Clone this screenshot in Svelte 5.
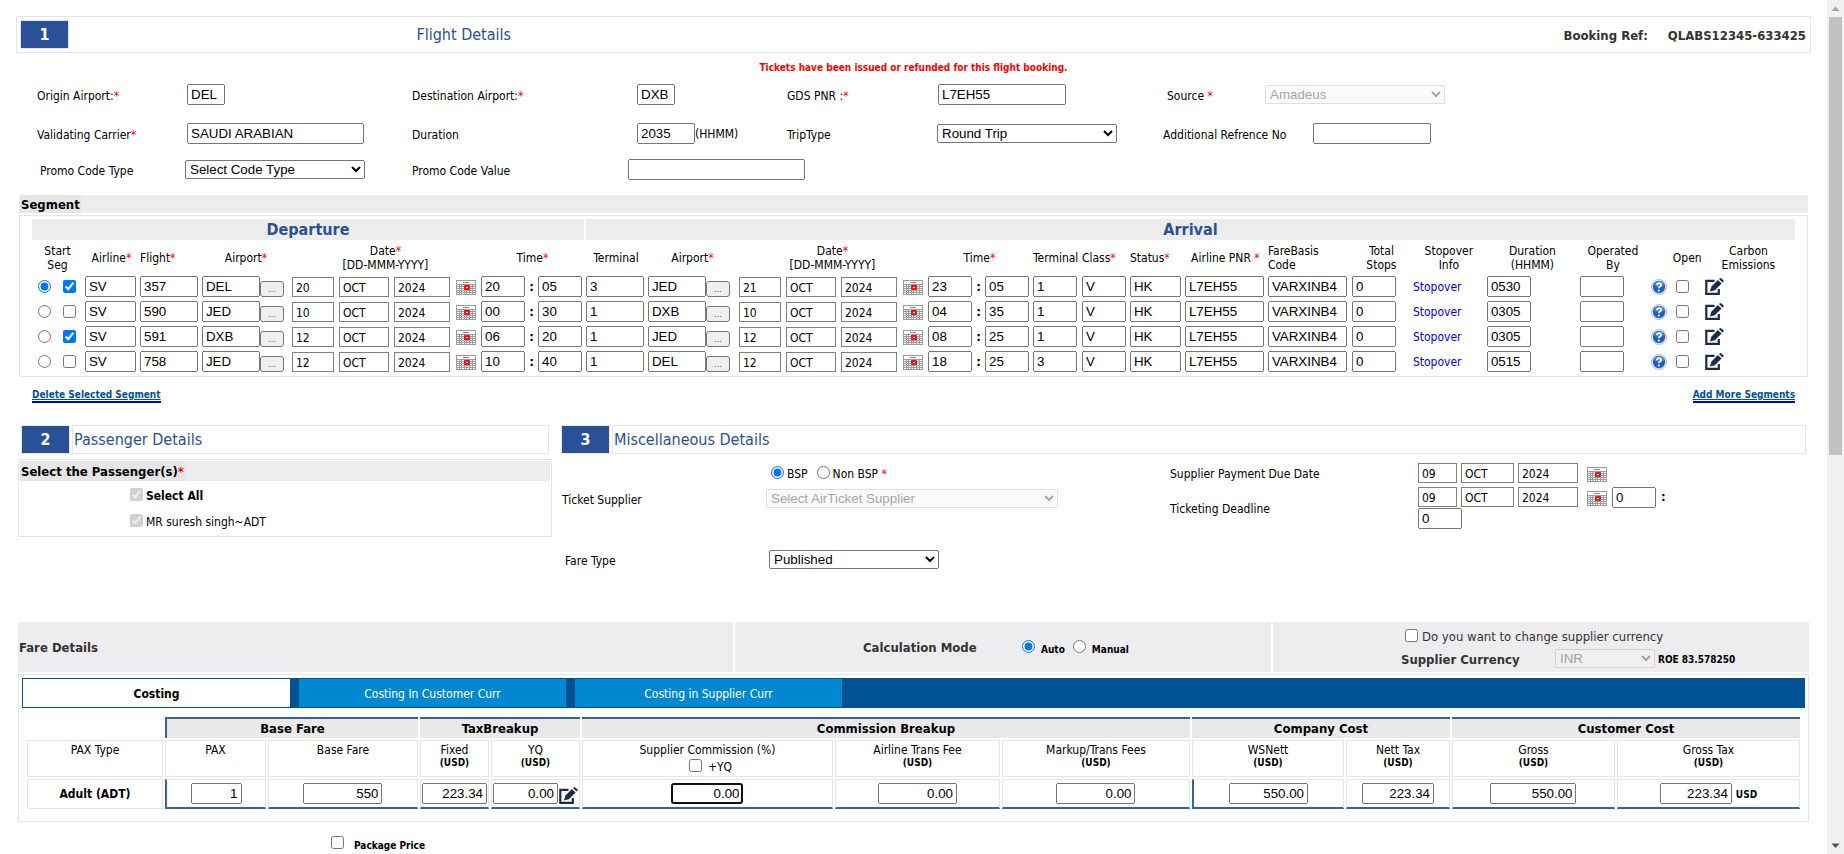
<script>
  const segments = [
    { start: true, pick: true, flight: '357', from: 'DEL', dd: '20', dt: ['20', '05'], dTerm: '3', to: 'JED', ad: '21', at: ['23', '05'], aTerm: '1', dur: '0530' },
    { start: false, pick: false, flight: '590', from: 'JED', dd: '10', dt: ['00', '30'], dTerm: '1', to: 'DXB', ad: '10', at: ['04', '35'], aTerm: '1', dur: '0305' },
    { start: false, pick: true, flight: '591', from: 'DXB', dd: '12', dt: ['06', '20'], dTerm: '1', to: 'JED', ad: '12', at: ['08', '25'], aTerm: '1', dur: '0305' },
    { start: false, pick: false, flight: '758', from: 'JED', dd: '12', dt: ['10', '40'], dTerm: '1', to: 'DEL', ad: '12', at: ['18', '25'], aTerm: '3', dur: '0515' }
  ];

  const segCols = [53, 55, 62, 90, 189, 105, 62, 91, 189, 105, 49, 48, 55, 83, 84, 61, 74, 93, 68, 25, 31, 91];
  const costCols = [136, 101, 150, 69, 89, 251, 165, 188, 152, 104, 163, 183];
  const segTotal = segCols.reduce((a, b) => a + b, 0);
  const costTotal = costCols.reduce((a, b) => a + b, 0);
</script>

{#snippet star()}<span class="star">*</span>{/snippet}

{#snippet calendar()}
  <svg class="cal" viewBox="0 0 20 15" width="20" height="15" role="img" aria-label="Pick a date">
    <rect x="0" y="0" width="20" height="15" fill="#9b9b9b" />
    <rect x="1" y="1" width="18" height="3" fill="#fff" />
    <rect x="7" y="2" width="6" height="1" fill="#8a8a8a" />
    {#each [5, 7, 9, 11, 13] as y}
      {#each [1, 4, 6, 9, 11, 14, 17] as x}
        <rect {x} {y} width={x === 4 || x === 9 ? 1 : 2} height="1" fill="#fff" />
      {/each}
    {/each}
    <rect x="9" y="6" width="4" height="3" fill="#fff" stroke="#f01414" stroke-width="2" stroke-linejoin="round" />
  </svg>
{/snippet}

{#snippet edit()}
  <svg class="edit" viewBox="0 0 19 17" width="19" height="17" aria-hidden="true">
    <path d="M9.5 2.9H1.3V15.8H13.8V11" fill="none" stroke="#1a2b4c" stroke-width="2.2" />
    <path d="M12.8 1.9L16.6 5.4L9.8 12.2L5 13.6L6.3 8.8Z" fill="#1a2b4c" />
    <path d="M14 1.1L15 0.3Q15.7 -0.1 16.4 0.4L18.4 2.3Q19 3 18.4 3.7L17.5 4.4Z" fill="#1a2b4c" />
  </svg>
{/snippet}

{#snippet help()}
  <svg viewBox="0 0 16 16" width="16" height="16" aria-hidden="true">
    <circle cx="8" cy="8" r="7.5" fill="#f2f4f8" stroke="#b4bccb" stroke-width="1" />
    <circle cx="8" cy="8" r="6.2" fill="#1c5fc2" />
    <path d="M2.4 6.5A5.8 5.8 0 0 1 13.6 6.5Q8 9 2.4 6.5Z" fill="#3f83dc" />
    <path d="M5.9 6.2Q6 4.2 8.2 4.2Q10.4 4.3 10.2 6.1Q10 7.3 8.6 7.8Q7.9 8.1 7.9 9.2" fill="none" stroke="#fff" stroke-width="1.7" />
    <circle cx="7.8" cy="11.6" r="1.1" fill="#fff" />
  </svg>
{/snippet}

{#snippet segDate(day, name)}
  <div class="line">
    <span class="trio">
      <input class="flat w42" aria-label="{name} day" value={day} />
      <input class="flat w50" aria-label="{name} month" value="OCT" />
      <input class="flat w56" aria-label="{name} year" value="2024" />
    </span>
    {@render calendar()}
  </div>
{/snippet}

{#snippet segTime(t, name)}
  <div class="line time">
    <input class="w44" aria-label="{name} hour" value={t[0]} /><b>:</b>
    <input class="w44" aria-label="{name} minute" value={t[1]} />
  </div>
{/snippet}

<div class="page">
  <main>
    <header class="top">
      <span class="num">1</span>
      <h2>Flight Details</h2>
      <p class="ref"><span>Booking Ref:</span><span>QLABS12345-633425</span></p>
    </header>

    <p class="warn">Tickets have been issued or refunded for this flight booking.</p>

    <section class="fields">
      <div class="row r1">
        <label for="origin">Origin Airport:{@render star()}</label>
        <div><input id="origin" class="w38" value="DEL" /></div>
        <label for="dest">Destination Airport:{@render star()}</label>
        <div><input id="dest" class="w38" value="DXB" /></div>
        <label for="pnr">GDS PNR :{@render star()}</label>
        <div><input id="pnr" class="w128" value="L7EH55" /></div>
        <label for="source">Source {@render star()}</label>
        <div><select id="source" class="w180" disabled><option>Amadeus</option></select></div>
      </div>
      <div class="row r2">
        <label for="carrier">Validating Carrier{@render star()}</label>
        <div><input id="carrier" class="w177" value="SAUDI ARABIAN" /></div>
        <label for="duration">Duration</label>
        <div class="unit"><input id="duration" class="w58" value="2035" />(HHMM)</div>
        <label for="trip">TripType</label>
        <div><select id="trip" class="w180"><option>Round Trip</option></select></div>
        <label for="addref">Additional Refrence No</label>
        <div><input id="addref" class="w118" /></div>
      </div>
      <div class="row r3">
        <label for="promo">Promo Code Type</label>
        <div><select id="promo" class="w180"><option>Select Code Type</option></select></div>
        <label for="promoval">Promo Code Value</label>
        <div><input id="promoval" class="w177" /></div>
      </div>
    </section>

    <section class="segment">
      <h3 class="bar"><span>Segment</span></h3>
      <div class="box">
        <table class="seg">
          <colgroup>
            {#each segCols as w}<col style="width: {(w / segTotal) * 100}%" />{/each}
          </colgroup>
          <thead>
            <tr class="legs">
              <th colspan="6" class="dep">Departure</th>
              <th colspan="16">Arrival</th>
            </tr>
            <tr class="heads">
              <th>Start<br />Seg</th>
              <th>Airline{@render star()}</th>
              <th class="l">Flight{@render star()}</th>
              <th>Airport{@render star()}</th>
              <th>Date{@render star()}<br />[DD-MMM-YYYY]</th>
              <th>Time{@render star()}</th>
              <th>Terminal</th>
              <th>Airport{@render star()}</th>
              <th>Date{@render star()}<br />[DD-MMM-YYYY]</th>
              <th>Time{@render star()}</th>
              <th class="l">Terminal</th>
              <th class="l">Class{@render star()}</th>
              <th class="l">Status{@render star()}</th>
              <th>Airline PNR {@render star()}</th>
              <th class="l">FareBasis<br />Code</th>
              <th>Total<br />Stops</th>
              <th>Stopover<br />Info</th>
              <th>Duration<br />(HHMM)</th>
              <th>Operated<br />By</th>
              <th></th>
              <th class="l">Open</th>
              <th>Carbon<br />Emissions</th>
            </tr>
          </thead>
          <tbody>
            {#each segments as s, i}
              <tr>
                <td>
                  <div class="start">
                    <input type="radio" name="startseg" checked={s.start} aria-label="Start segment {i + 1}" />
                    <input type="checkbox" checked={s.pick} aria-label="Select segment {i + 1}" />
                  </div>
                </td>
                <td><input class="w51" aria-label="Airline" value="SV" /></td>
                <td><input class="w58" aria-label="Flight" value={s.flight} /></td>
                <td><div class="line"><input class="w58" aria-label="Departure airport" value={s.from} /><button class="more">...</button></div></td>
                <td>{@render segDate(s.dd, 'Departure')}</td>
                <td>{@render segTime(s.dt, 'Departure')}</td>
                <td><input class="w58" aria-label="Departure terminal" value={s.dTerm} /></td>
                <td><div class="line"><input class="w58" aria-label="Arrival airport" value={s.to} /><button class="more">...</button></div></td>
                <td>{@render segDate(s.ad, 'Arrival')}</td>
                <td>{@render segTime(s.at, 'Arrival')}</td>
                <td><input class="w44" aria-label="Arrival terminal" value={s.aTerm} /></td>
                <td><input class="w44" aria-label="Class" value="V" /></td>
                <td><input class="w51" aria-label="Status" value="HK" /></td>
                <td><input class="w79" aria-label="Airline PNR" value="L7EH55" /></td>
                <td><input class="w79" aria-label="Fare basis code" value="VARXINB4" /></td>
                <td><input class="w44" aria-label="Total stops" value="0" /></td>
                <td><a class="stop" href="#stopover">Stopover</a></td>
                <td><input class="w44" aria-label="Duration" value={s.dur} /></td>
                <td><input class="w44" aria-label="Operated by" /></td>
                <td><div class="icon helpicon">{@render help()}</div></td>
                <td><div class="open"><input type="checkbox" aria-label="Open" /></div></td>
                <td><div class="icon">{@render edit()}</div></td>
              </tr>
            {/each}
          </tbody>
        </table>
      </div>
      <div class="links">
        <a href="#delete">Delete Selected Segment</a>
        <a href="#add">Add More Segments</a>
      </div>
    </section>

    <div class="mid">
      <section>
        <header class="sub left">
          <span class="num">2</span>
          <h2>Passenger Details</h2>
        </header>
        <div class="pax">
          <h3 class="bar"><span>Select the Passenger(s){@render star()}</span></h3>
          <label class="chk"><input type="checkbox" checked disabled /><b>Select All</b></label>
          <label class="chk"><input type="checkbox" checked disabled /><span>MR suresh singh~ADT</span></label>
        </div>
      </section>

      <section>
        <header class="sub">
          <span class="num">3</span>
          <h2>Miscellaneous Details</h2>
        </header>
        <div class="misc">
          <div class="supplier">
            <div class="pair radios">
              <span></span>
              <div>
                <label><input type="radio" name="bsp" checked /><span>BSP</span></label>
                <label><input type="radio" name="bsp" /><span>Non BSP {@render star()}</span></label>
              </div>
            </div>
            <div class="pair">
              <label for="supplier">Ticket Supplier</label>
              <select id="supplier" class="w292" disabled><option>Select AirTicket Supplier</option></select>
            </div>
            <div class="pair fare">
              <label for="faretype">Fare Type</label>
              <select id="faretype" class="w170"><option>Published</option></select>
            </div>
          </div>
          <div class="dates">
            <label for="due">Supplier Payment Due Date</label>
            <div class="when">
              <span class="set">
                <input id="due" class="flat w39" value="09" />
                <input class="flat w53" aria-label="Due month" value="OCT" />
                <input class="flat w60" aria-label="Due year" value="2024" />
              </span>
              {@render calendar()}
            </div>
            <label for="deadline">Ticketing Deadline</label>
            <div>
              <div class="when">
                <span class="set">
                  <input id="deadline" class="flat w39" value="09" />
                  <input class="flat w53" aria-label="Deadline month" value="OCT" />
                  <input class="flat w60" aria-label="Deadline year" value="2024" />
                </span>
                {@render calendar()}
                <input class="w44 hour" aria-label="Deadline hour" value="0" /><b>:</b>
              </div>
              <input class="w44" aria-label="Deadline minute" value="0" />
            </div>
          </div>
        </div>
      </section>
    </div>

    <section class="faresec">
      <div class="farebar">
        <div class="title"><h3>Fare Details</h3></div>
        <div class="mode">
          <strong>Calculation Mode</strong>
          <div>
            <label><input type="radio" name="mode" checked /><span>Auto</span></label>
            <label><input type="radio" name="mode" /><span>Manual</span></label>
          </div>
        </div>
        <div class="curr">
          <label class="ask"><input type="checkbox" /><span>Do you want to change supplier currency</span></label>
          <div class="pick">
            <label for="curr">Supplier Currency</label>
            <select id="curr" class="w100" disabled><option>INR</option></select>
            <b>ROE 83.578250</b>
          </div>
        </div>
      </div>

      <div class="panel">
        <nav>
          <button class="on">Costing</button>
          <button>Costing In Customer Curr</button>
          <button>Costing in Supplier Curr</button>
        </nav>
        <table class="cost">
          <colgroup>
            {#each costCols as w}<col style="width: {(w / costTotal) * 100}%" />{/each}
          </colgroup>
          <thead>
            <tr class="groups">
              <td></td>
              <th colspan="2" class="edge">Base Fare</th>
              <th colspan="2">TaxBreakup</th>
              <th colspan="3">Commission Breakup</th>
              <th colspan="2">Company Cost</th>
              <th colspan="2">Customer Cost</th>
            </tr>
            <tr class="names">
              <th>PAX Type</th>
              <th>PAX</th>
              <th>Base Fare</th>
              <th>Fixed<b>(USD)</b></th>
              <th>YQ<b>(USD)</b></th>
              <th>Supplier Commission (%)<label class="yq"><input type="checkbox" /><span>+YQ</span></label></th>
              <th>Airline Trans Fee<b>(USD)</b></th>
              <th>Markup/Trans Fees<b>(USD)</b></th>
              <th>WSNett<b>(USD)</b></th>
              <th>Nett Tax<b>(USD)</b></th>
              <th>Gross<b>(USD)</b></th>
              <th>Gross Tax<b>(USD)</b></th>
            </tr>
          </thead>
          <tbody>
            <tr class="vals">
              <th>Adult (ADT)</th>
              <td class="edge"><input class="w51" aria-label="PAX" value="1" /></td>
              <td><input class="w79" aria-label="Base fare" value="550" /></td>
              <td><input class="w65" aria-label="Fixed tax" value="223.34" /></td>
              <td><div class="cell"><input class="w65" aria-label="YQ tax" value="0.00" />{@render edit()}</div></td>
              <td><input class="w72 active" aria-label="Supplier commission" value="0.00" /></td>
              <td><input class="w79" aria-label="Airline trans fee" value="0.00" /></td>
              <td><input class="w79" aria-label="Markup" value="0.00" /></td>
              <td class="edge"><input class="w79" aria-label="WSNett" value="550.00" /></td>
              <td><input class="w72" aria-label="Nett tax" value="223.34" /></td>
              <td><input class="w86" aria-label="Gross" value="550.00" /></td>
              <td><div class="cell usd"><input class="w72" aria-label="Gross tax" value="223.34" /><b>USD</b></div></td>
            </tr>
          </tbody>
        </table>
      </div>
      <label class="package"><input type="checkbox" /><span>Package Price</span></label>
    </section>
  </main>

  <div class="scroll" aria-hidden="true">
    <svg viewBox="0 0 17 17" width="17" height="17"><path d="M4.5 11H12.5L8.5 6.5Z" fill="#a3a3a3" /></svg>
    <div class="track"><div class="thumb"></div></div>
    <svg viewBox="0 0 17 17" width="17" height="17"><path d="M4.5 6.5H12.5L8.5 11Z" fill="#505050" /></svg>
  </div>
</div>

<style>
  :global(body) {
    background: #fff;
    overflow: hidden;
  }
  .page {
    --sans: 'DejaVu Sans Condensed', 'DejaVu Sans', sans-serif;
    display: grid;
    grid-template-columns: minmax(0, 1fr) 17px;
    height: 100vh;
    font: 12px/14px var(--sans);
    color: #000;
  }
  main {
    padding: 16px 16px 0;
    overflow: hidden;
  }
  h2, h3, p { margin: 0; }
  h2 {
    font-size: 16px;
    line-height: 20px;
    font-weight: 400;
    color: #2a5098;
  }
  h3 { font-size: 13px; line-height: 18px; }
  input, select {
    margin: 0;
    box-sizing: border-box;
    font-family: 'Liberation Sans', Arial, sans-serif;
  }
  input:not([type]) { height: 21px; display: block; }
  select { height: 19px; display: block; }
  input.flat {
    height: 20px;
    border: 1px solid #808080;
    border-radius: 0;
    padding: 2px 3px 0;
    font-family: var(--sans);
    font-size: 12px;
  }
  input[type='radio'], input[type='checkbox'] {
    width: 13px;
    height: 13px;
    flex: none;
  }
  .star { color: #f00; }

  .w38 { width: 38px; } .w39 { width: 39px; } .w42 { width: 42px; }
  .w44 { width: 44px; } .w50 { width: 50px; } .w51 { width: 51px; }
  .w53 { width: 53px; } .w56 { width: 56px; } .w58 { width: 58px; }
  .w60 { width: 60px; } .w65 { width: 65px; } .w72 { width: 72px; }
  .w79 { width: 79px; } .w86 { width: 86px; } .w100 { width: 100px; }
  .w118 { width: 118px; } .w128 { width: 128px; } .w170 { width: 170px; }
  .w177 { width: 177px; } .w180 { width: 180px; } .w292 { width: 292px; }

  .num {
    box-sizing: border-box;
    width: 49px;
    border: 1px solid #e6e6e6;
    background: #2a5098;
    color: #fff;
    font-size: 16px;
    font-weight: 700;
    line-height: 27px;
    text-align: center;
  }
  .top {
    box-sizing: border-box;
    display: grid;
    grid-template-columns: 396fr 1146fr auto;
    align-items: center;
    height: 37px;
    padding: 0 4px 0 3px;
    border: 1px solid #e6e6e6;
  }
  .top h2 { padding-top: 1px; }
  .ref {
    display: flex;
    gap: 20px;
    padding-top: 2px;
    font-size: 13px;
    font-weight: 700;
    color: #333;
  }
  .warn {
    margin: 8px 0 9px;
    font-size: 10px;
    font-weight: 700;
    color: #f00;
    text-align: center;
  }

  .fields { padding-left: 21px; }
  .row { display: grid; align-items: center; min-height: 21px; }
  .row label { padding-top: 2px; white-space: nowrap; }
  .r1 { grid-template-columns: 150fr 225fr 225fr 150fr 151fr 229fr 98fr 546fr; margin-bottom: 18px; }
  .r2 { grid-template-columns: 150fr 225fr 225fr 150fr 150fr 226fr 150fr 498fr; margin-bottom: 15px; }
  .r3 { grid-template-columns: 145fr 227fr 216fr 1183fr; padding-left: 3px; }
  .unit { display: flex; align-items: center; }

  .segment { margin: 15px 3px 0; }
  .bar {
    box-sizing: border-box;
    height: 18px;
    background: #ededee;
    font-weight: 700;
    overflow: hidden;
  }
  .bar span { display: inline-block; background: #e6e6e6; }
  .bar > span { padding: 1px 1px 0; }
  .segment .bar { padding-left: 1px; }
  .box {
    margin-top: 2px;
    padding: 3px 12px 2px;
    border: 1px solid #e6e6e6;
  }
  table { width: 100%; table-layout: fixed; border-spacing: 0; }
  .seg th, .seg td { padding: 0; font-weight: 400; white-space: nowrap; }
  .seg .legs th {
    background: #ededee;
    color: #2a5098;
    font-size: 16px;
    font-weight: 700;
    line-height: 20px;
    padding-top: 1px;
  }
  .seg .legs .dep { border-right: 2px solid #fff; }
  .seg .heads th { height: 32px; padding-top: 2px; padding-right: 2px; }
  .seg .heads .l { text-align: left; padding-right: 0; }
  .seg td { height: 25px; }
  .line { display: flex; align-items: flex-end; }
  .trio { display: flex; gap: 5px; }
  .seg .cal { margin: 0 0 2px 6px; }
  .time { align-items: center; }
  .time b { width: 13px; text-align: center; font-size: 13px; }
  .more {
    box-sizing: border-box;
    width: 24px;
    height: 16px;
    padding: 0;
    border: 1px solid #767676;
    border-radius: 3px;
    background: #efefef;
    color: #555;
    font: 9px/12px var(--sans);
  }
  .start { display: flex; align-items: center; gap: 12px; padding-left: 6px; }
  .stop { color: #00e; text-decoration: none; }
  .icon, .open { display: flex; align-items: center; }
  .icon { padding-left: 1px; }
  .helpicon { padding-left: 3px; }
  .open { padding-left: 3px; }
  svg { display: block; flex: none; }
  .links {
    display: flex;
    justify-content: space-between;
    margin-top: 12px;
    padding: 0 13px;
  }
  .links a {
    border-bottom: 2px solid #00e;
    color: #005293;
    font-size: 10px;
    font-weight: 700;
    line-height: 12px;
  }

  .mid {
    display: grid;
    grid-template-columns: 534fr 1245fr;
    gap: 9px;
    margin: 22px 5px 0 2px;
  }
  .sub { display: flex; gap: 2px; }
  .sub.left { padding: 0 3px; }
  .sub h2 {
    flex: 1;
    padding: 4px 1px 3px;
    border: 1px solid #e6e6e6;
  }
  .pax {
    box-sizing: border-box;
    height: 78px;
    margin-top: 5px;
    padding: 1px;
    border: 1px solid #e6e6e6;
  }
  .pax .bar { height: 20px; line-height: 20px; }
  .chk {
    display: flex;
    align-items: center;
    gap: 3px;
    height: 26px;
    padding-left: 110px;
  }
  .chk b, .chk span { padding-top: 3px; }
  .misc {
    display: grid;
    grid-template-columns: 609fr 636fr;
    padding-top: 9px;
  }
  .pair {
    display: grid;
    grid-template-columns: 205px 1fr;
    align-items: center;
  }
  .pair.radios { height: 26px; align-items: start; }
  .radios div { display: flex; gap: 9px; padding: 3px 0 0 5px; }
  .radios label { display: flex; gap: 3px; white-space: pre; }
  .radios label span { padding-top: 1px; }
  .radios label .star { padding: 0; }
  .pair > label { padding-top: 2px; padding-left: 1px; }
  .pair.fare { margin-top: 42px; padding-left: 3px; }
  .dates {
    display: grid;
    grid-template-columns: 248px 1fr;
    row-gap: 4px;
    align-items: center;
    align-content: start;
  }
  .dates > label { padding-top: 2px; }
  .when { display: flex; height: 20px; margin-bottom: 1px; align-items: flex-start; }
  .dates > .when { margin: 0; }
  .set { display: flex; gap: 4px; margin-right: 9px; }
  .when .cal { margin-top: 4px; }
  .hour { margin-left: 5px; }
  .when b { padding: 3px 0 0 5px; font-size: 13px; }

  .faresec { margin: 53px 2px 0; }
  .farebar {
    display: grid;
    grid-template-columns: 715fr 536fr 536fr;
    gap: 2px;
    height: 50px;
  }
  .farebar > div { background: #ededef; color: #333; }
  .title { display: flex; align-items: center; padding: 2px 0 0 1px; }
  .mode { display: flex; align-items: center; padding: 2px 0 0 128px; }
  .mode strong { width: 159px; font-size: 13px; }
  .mode div { display: flex; gap: 8px; }
  .mode label { display: flex; gap: 6px; color: #000; font-size: 10px; font-weight: 700; line-height: 14px; }
  .mode label span { padding-top: 3px; }
  .ask { display: flex; gap: 4px; padding: 7px 0 0 132px; font-size: 13px; }
  .ask span { padding-top: 1px; }
  .pick { display: flex; align-items: center; padding: 5px 0 0 128px; }
  .pick label { width: 154px; padding-top: 2px; font-size: 13px; font-weight: 700; }
  .pick b { margin-left: 3px; padding-top: 2px; color: #000; font-size: 10px; white-space: nowrap; }

  .panel {
    margin-top: 2px;
    padding: 3px 3px 10px;
    border: 1px solid #e6e6e6;
  }
  nav {
    display: grid;
    grid-template-columns: 267fr 267fr 267fr 953fr;
    gap: 9px;
    height: 28px;
    padding: 1px;
    background: #005293;
  }
  nav button {
    padding: 2px 0 0;
    border: 0;
    background: #0089d0;
    color: #fff;
    font: 12px/26px var(--sans);
  }
  nav .on { background: #fff; color: #000; font-weight: 700; }

  .cost {
    width: auto;
    min-width: calc(100% - 6px);
    margin: 7px 3px 0;
    border-spacing: 2px;
  }
  .cost th, .cost td { box-sizing: border-box; padding: 0; }
  .groups th {
    height: 21px;
    border-top: 2px solid #31659c;
    background: #e9e9e9;
    font-size: 13px;
    line-height: 18px;
  }
  .groups .edge, .vals .edge { border-left: 2px solid #31659c; }
  .names th {
    height: 37px;
    padding-top: 3px;
    border: 1px solid #e6e6e6;
    vertical-align: top;
    font-weight: 400;
    line-height: 13px;
  }
  .names b { display: block; font-size: 10px; line-height: 12px; }
  .yq { display: flex; justify-content: center; gap: 6px; height: 14px; padding: 2px 0 0 6px; }
  .yq span { padding-top: 2px; }
  .vals th, .vals td { height: 30px; border: 1px solid #e6e6e6; }
  .vals th { font-size: 12px; }
  .vals td { border-bottom: 2px solid #31659c; }
  .vals input { margin: 0 auto; text-align: right; }
  .cell { display: flex; align-items: center; padding: 0 1px; }
  .cell input { margin: 0; }
  .cell .edit { margin: 3px 0 0 1px; }
  .cell.usd { justify-content: center; gap: 4px; }
  .usd b { padding-top: 2px; font-size: 10px; }
  .active { border: 2px solid #101010; border-radius: 3px; outline: 0; }
  .package {
    display: flex;
    gap: 10px;
    padding: 14px 0 0 313px;
    font-size: 10px;
    font-weight: 700;
    line-height: 14px;
  }
  .package span { padding-top: 3px; }

  .scroll { display: flex; flex-direction: column; background: #f1f1f1; }
  .track {
    flex: 1;
    display: grid;
    grid-template-rows: 438fr 382fr;
    padding: 0 2px;
  }
  .thumb { background: #c1c1c1; }
</style>
